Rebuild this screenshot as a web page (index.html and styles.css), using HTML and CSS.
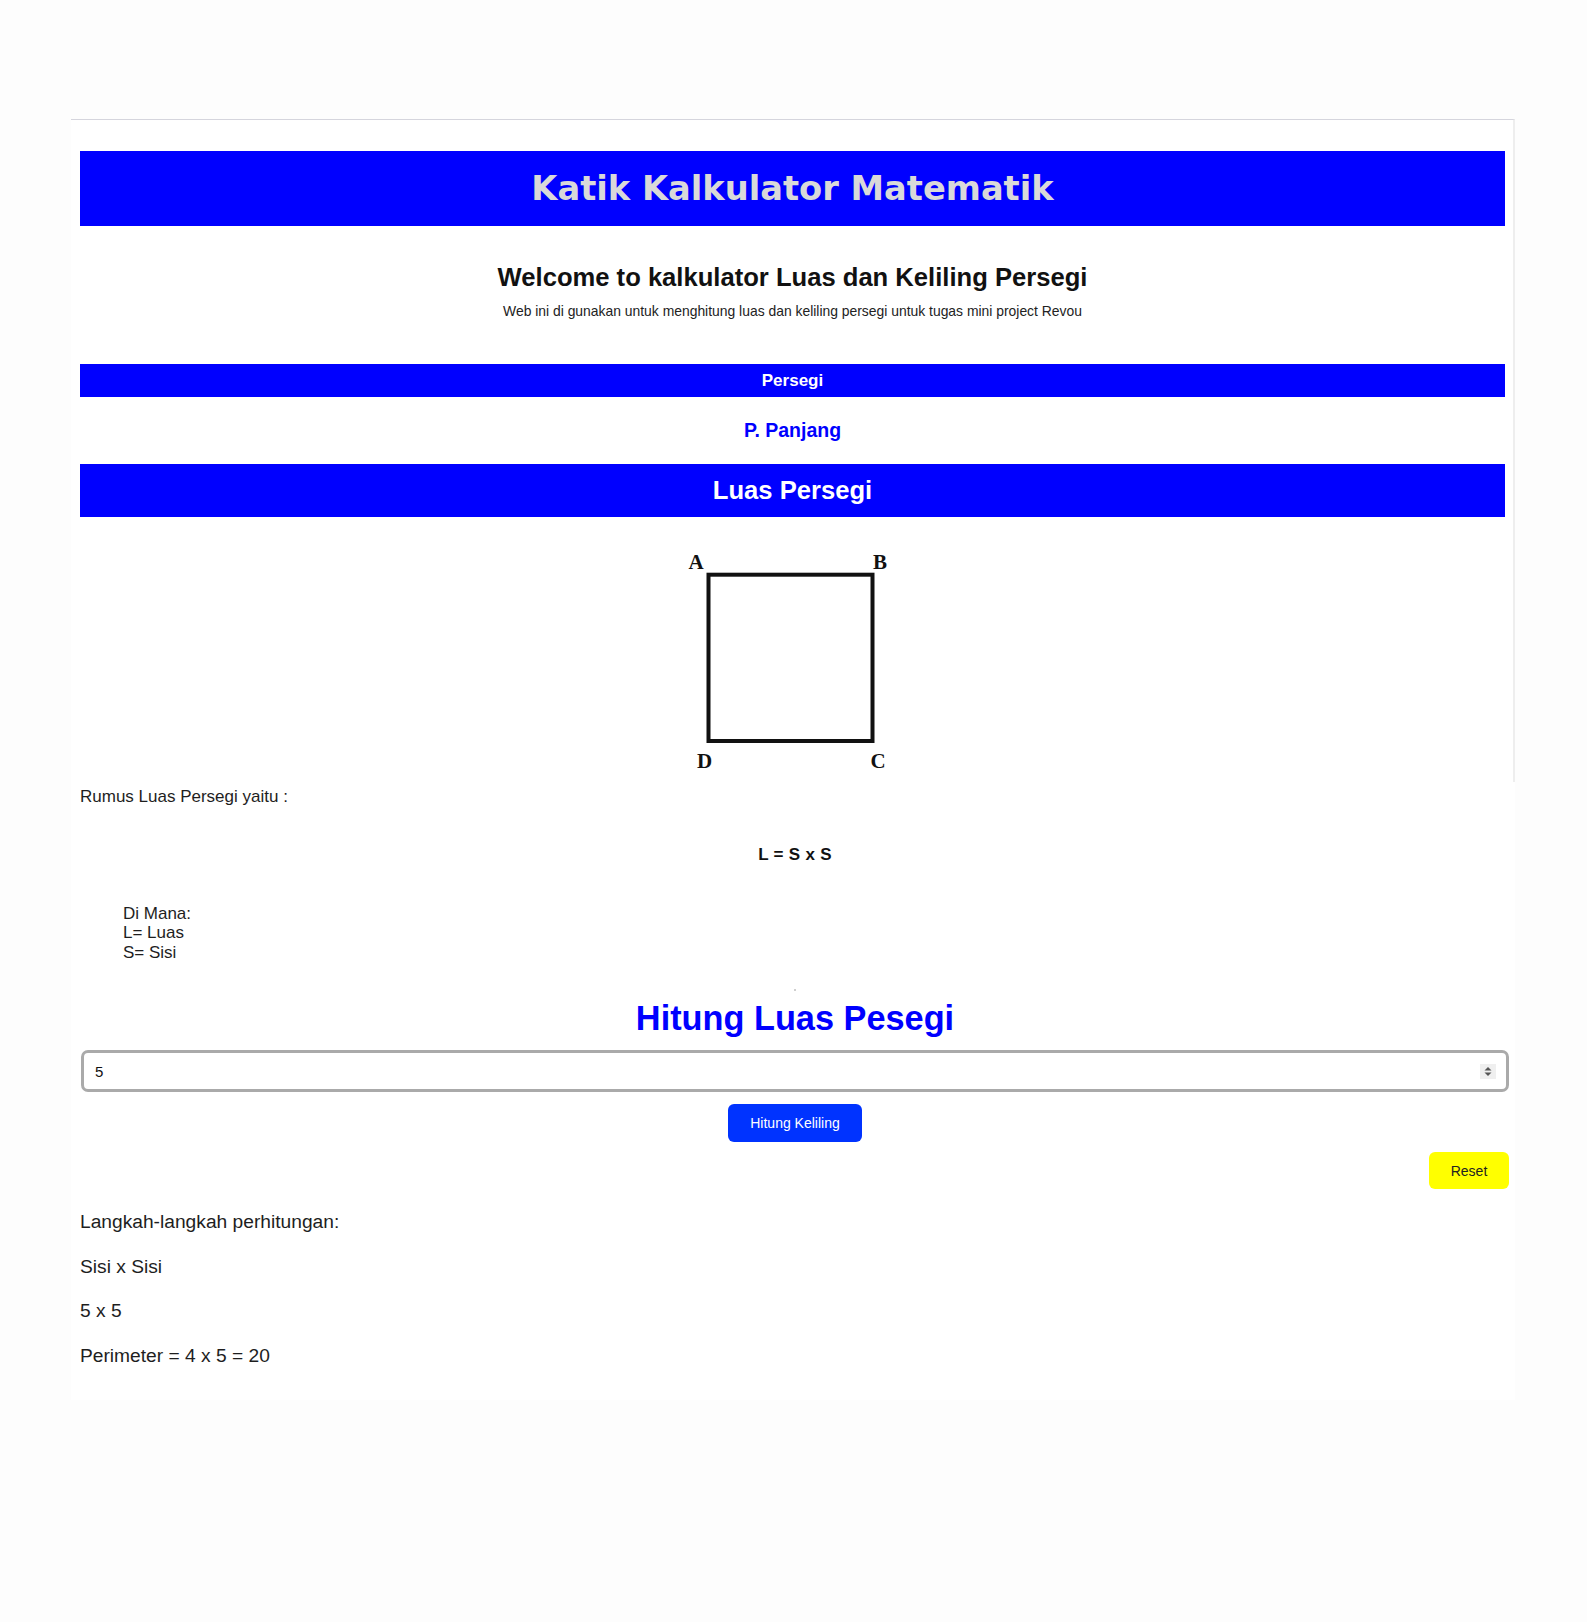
FILE: index.html
```html
<!DOCTYPE html>
<html lang="id">
<head>
<meta charset="utf-8">
<title>Katik Kalkulator Matematik</title>
<link rel="stylesheet" href="styles.css">
</head>
<body>
<div class="page">
  <section class="upper">
    <header class="banner"><h1>Katik Kalkulator Matematik</h1></header>
    <div class="intro">
      <h2>Welcome to kalkulator Luas dan Keliling Persegi</h2>
      <p>Web ini di gunakan untuk menghitung luas dan keliling persegi untuk tugas mini project Revou</p>
    </div>
    <nav class="tabbar">Persegi</nav>
    <div class="tablink">P. Panjang</div>
    <h3 class="section-bar">Luas Persegi</h3>
    <figure class="figure">
      <svg width="225" height="237" viewBox="0 0 225 237" aria-label="Persegi ABCD">
        <rect class="sq" x="28.5" y="29.7" width="164" height="166.3"/>
        <text class="lbl" x="8.5" y="24">A</text>
        <text class="lbl" x="193" y="24">B</text>
        <text class="lbl" x="17" y="223">D</text>
        <text class="lbl" x="190.5" y="223">C</text>
      </svg>
    </figure>
  </section>
  <section class="lower">
    <p class="rumus">Rumus Luas Persegi yaitu :</p>
    <p class="formula">L = S x S</p>
    <blockquote class="legend">Di Mana:<br>L= Luas<br>S= Sisi</blockquote>
    <div class="dot"></div>
    <h2 class="calc-title">Hitung Luas Pesegi</h2>
    <div class="calc">
      <div class="field">
        <input class="num" type="text" value="5">
        <span class="spin">
          <svg width="16" height="15" viewBox="0 0 16 15">
            <path d="M4.5 6.5 L8 3 L11.5 6.5 Z" fill="#555"/>
            <path d="M4.5 8.5 L8 12 L11.5 8.5 Z" fill="#555"/>
          </svg>
        </span>
      </div>
      <div class="actions"><button class="btn-primary" type="button">Hitung Keliling</button></div>
      <div class="reset-row"><button class="btn-reset" type="button">Reset</button></div>
    </div>
    <div class="steps">
      <p>Langkah-langkah perhitungan:</p>
      <p>Sisi x Sisi</p>
      <p>5 x 5</p>
      <p>Perimeter = 4 x 5 = 20</p>
    </div>
  </section>
</div>
</body>
</html>
```

FILE: styles.css
```css
* { box-sizing: border-box; }

body {
  margin: 0;
  background: #fdfdfd;
  font-family: "Liberation Sans", Arial, sans-serif;
  color: #1e1e1e;
}

.page {
  margin: 119px 0 0 71px;
  width: 1444px;
  background: #ffffff;
}

.upper {
  border-top: 1px solid #d5d5dd;
  border-right: 2px solid #eeeeee;
  padding: 31px 8px 0 9px;
}

.banner {
  height: 75px;
  background: #0000ff;
}

.banner h1 {
  margin: 0;
  font-family: "DejaVu Sans", Verdana, sans-serif;
  font-weight: 700;
  font-size: 33.7px;
  line-height: 75px;
  color: #d9d9d9;
  text-align: center;
}

.intro {
  text-align: center;
}

.intro h2 {
  margin: 36px 0 0;
  font-size: 25.6px;
  line-height: 30px;
  font-weight: 700;
  color: #111111;
}

.intro p {
  margin: 10px 0 0;
  font-size: 13.9px;
  line-height: 18px;
  color: #222222;
}

.tabbar {
  margin-top: 44px;
  height: 33px;
  line-height: 33px;
  background: #0000ff;
  color: #ffffff;
  font-weight: 700;
  font-size: 17px;
  text-align: center;
}

.tablink {
  margin-top: 21px;
  line-height: 24px;
  font-size: 19.5px;
  font-weight: 700;
  color: #0000ff;
  text-align: center;
}

.section-bar {
  margin: 22px 0 0;
  height: 53px;
  line-height: 53px;
  background: #0000ff;
  color: #ffffff;
  font-size: 25.6px;
  font-weight: 700;
  text-align: center;
}

.figure {
  margin: 28px 0 0;
  display: flex;
  justify-content: center;
}

.figure svg { display: block; }

.sq {
  fill: none;
  stroke: #111111;
  stroke-width: 4;
}

.lbl {
  font-family: "Liberation Serif", "Times New Roman", serif;
  font-weight: 700;
  font-size: 21px;
  fill: #111111;
}

.lower {
  padding: 0 5px 33px 9px;
}

.rumus {
  margin: 4.5px 0 0;
  font-size: 17px;
  line-height: 20px;
}

.formula {
  margin: 38px 0 0;
  font-size: 17px;
  line-height: 20px;
  font-weight: 700;
  letter-spacing: 0.3px;
  text-align: center;
  color: #111111;
}

.legend {
  margin: 39px 0 0 43px;
  font-size: 17px;
  line-height: 19.5px;
}

.dot {
  margin: 27px auto 0;
  width: 2px;
  height: 2px;
  background: #cfcfcf;
}

.calc-title {
  margin: 7px 0 0;
  font-size: 34.3px;
  line-height: 40px;
  font-weight: 700;
  color: #0000ff;
  text-align: center;
}

.calc {
  margin: 12px 1px 0 1px;
}

.field {
  height: 42px;
  border: 3px solid #aaaaaa;
  border-radius: 7px;
  display: flex;
  align-items: center;
  padding: 0 10px 0 11px;
  background: #ffffff;
}

.num {
  flex: 1;
  border: none;
  outline: none;
  padding: 0;
  background: transparent;
  font-family: "Liberation Sans", Arial, sans-serif;
  font-size: 15px;
  color: #111111;
}

.spin {
  width: 16px;
  height: 15px;
  background: #efefef;
  display: flex;
}

.actions {
  margin-top: 12px;
  display: flex;
  justify-content: center;
}

.btn-primary {
  height: 38px;
  padding: 0 22px;
  border: none;
  border-radius: 6px;
  background: #0033ff;
  color: #ffffff;
  font-family: "Liberation Sans", Arial, sans-serif;
  font-size: 14px;
}

.reset-row {
  margin-top: 10px;
  display: flex;
  justify-content: flex-end;
}

.btn-reset {
  width: 80px;
  height: 37px;
  border: none;
  border-radius: 6px;
  background: #ffff00;
  color: #222222;
  font-family: "Liberation Sans", Arial, sans-serif;
  font-size: 14px;
}

.steps {
  margin-top: 22px;
  display: flex;
  flex-direction: column;
  gap: 22.7px;
}

.steps p {
  margin: 0;
  font-size: 19.2px;
  line-height: 22px;
}
```
